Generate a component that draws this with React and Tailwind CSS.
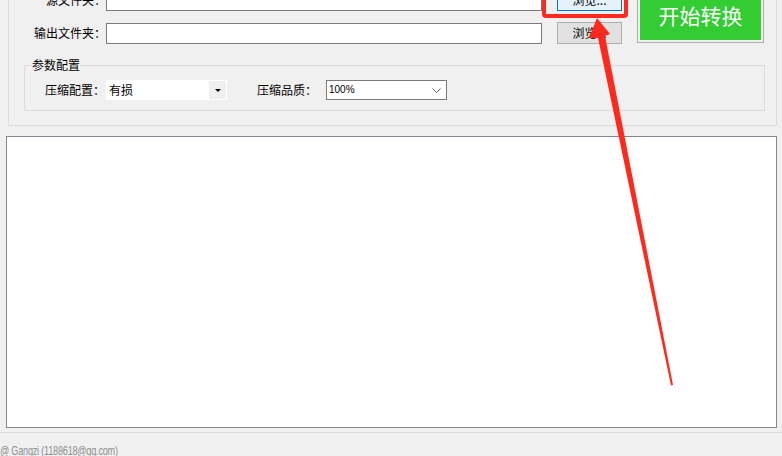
import React from "react";

const cjk = { fontFamily: '"Noto Sans CJK SC", "Noto Sans", sans-serif' };

function PathRow({ label, active }) {
    return (
        <div className="flex items-center h-[22px]">
            <div className="w-[97px] text-right text-[12px] text-black leading-none">{label}</div>
            <div className="w-[436px] h-[21px] bg-white border border-[#7a7a7a]" />
            <button
                className={
                    active
                        ? "ml-[15px] w-[65px] h-[22px] bg-[#e5f1fb] border border-[#0078d7] text-[12px] text-black leading-none"
                        : "ml-[15px] w-[65px] h-[22px] bg-[#e1e1e1] border border-[#adadad] text-[12px] text-black leading-none"
                }
            >
                浏览...
            </button>
        </div>
    );
}

export default function App() {
    return (
        <div className="relative w-[782px] h-[456px] overflow-hidden bg-[#f0f0f0]" style={cjk}>
            <div className="-mt-[24px]">

                {/* top settings panel */}
                <div className="ml-[8px] w-[769px] border border-[#dcdcdc] pt-[12px] pb-[14px]">
                    <div className="flex items-start">
                        <div className="flex flex-col gap-[11px]">
                            <PathRow label="源文件夹：" active />
                            <PathRow label="输出文件夹：" />
                        </div>
                        <div className="ml-[15px] -mt-[2px] w-[127px] h-[56px] border border-[#adadad] p-[2px]">
                            <div className="w-full h-full bg-[#33cc33] flex items-center justify-center text-white text-[21px] leading-none">
                                开始转换
                            </div>
                        </div>
                    </div>

                    {/* 参数配置 group */}
                    <div className="relative ml-[15px] mr-[11px] mt-[21px] border border-[#dcdcdc] pt-[14px] pb-[10px] pl-[20px]">
                        <span className="absolute -top-[9px] left-[7px] bg-[#f0f0f0] text-[12px] text-black leading-[16px]">参数配置</span>
                        <div className="flex items-center h-[20px]">
                            <div className="w-[61px] text-[12px] text-black leading-none">压缩配置：</div>
                            <div className="w-[121px] h-[20px] bg-white border border-white flex items-center">
                                <span className="flex-1 pl-[2px] text-[12px] text-black leading-none">有损</span>
                                <div className="w-[17px] h-full bg-[#f0f0f0] flex items-center justify-center">
                                    <svg width="6" height="3" viewBox="0 0 6 3">
                                        <path d="M0 0h6L3 3z" fill="#000" />
                                    </svg>
                                </div>
                            </div>
                            <div className="ml-[30px] w-[69px] text-[12px] text-black leading-none">压缩品质：</div>
                            <div className="w-[121px] h-[20px] bg-white border border-[#7a7a7a] flex items-center">
                                <span className="flex-1 pl-[2px] text-[10px] text-black leading-none" style={{ fontFamily: '"Liberation Sans", Arial, sans-serif' }}>
                                    100%
                                </span>
                                <svg className="mr-[5px]" width="9" height="5" viewBox="0 0 9 5">
                                    <path d="M0.5 0.5L4.5 4.5L8.5 0.5" fill="none" stroke="#606060" strokeWidth="1" />
                                </svg>
                            </div>
                        </div>
                    </div>
                </div>

                {/* log area */}
                <div className="ml-[6px] mt-[10px] w-[771px] h-[292px] bg-white border border-[#828790]" />

                {/* footer */}
                <div className="mt-[4px] border-t border-[#dadada] pt-[3px]">
                    <span
                        className="inline-block origin-left scale-x-[0.7] text-[13px] text-[#8e8e8e] leading-[16px] tracking-[-0.3px] whitespace-nowrap"
                        style={{ fontFamily: '"Liberation Sans", Arial, sans-serif' }}
                    >
                        @ Gangzi (1188618@qq.com)
                    </span>
                </div>
            </div>

            {/* red annotation overlay */}
            <svg className="absolute top-0 left-0 pointer-events-none" width="782" height="456" viewBox="0 0 782 456">
                <rect x="544" y="-20" width="82" height="36" rx="2" fill="none" stroke="#fe2a1e" strokeWidth="4" />
                <polygon
                    points="597,18 610,34 605,36 673,385 671,385.5 598,38 589,38"
                    fill="#fe2a1e"
                />
            </svg>
        </div>
    );
}
